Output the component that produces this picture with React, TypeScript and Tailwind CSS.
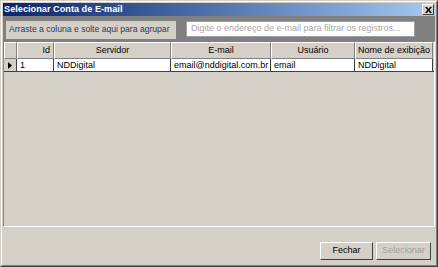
import React from "react";

const cols = [
  { name: "Id", w: 37 },
  { name: "Servidor", w: 117 },
  { name: "E-mail", w: 100 },
  { name: "Usuário", w: 84 },
  { name: "Nome de exibição", w: 78 },
];
const row = ["1", "NDDigital", "email@nddigital.com.br", "email", "NDDigital"];

export default function App() {
  return (
    <div
      className="w-[438px] h-[267px] bg-[#d4d0c8] border border-t-[#d4d0c8] border-l-[#d4d0c8] border-r-[#404040] border-b-[#404040] flex flex-col text-[9px] text-black"
      style={{ fontFamily: '"Liberation Sans", Arial, sans-serif' }}
    >
      <div className="border border-t-white border-l-white border-r-[#808080] border-b-[#808080] flex flex-col flex-1 p-px">
        {/* Title bar */}
        <div className="h-[13px] flex items-center justify-between bg-gradient-to-r from-[#0a246a] to-[#a6caf0] pl-[1px] pr-[1px]">
          <span className="text-white font-bold text-[9.2px] leading-none">Selecionar Conta de E-mail</span>
          <div className="w-[12px] h-[11px] bg-[#d4d0c8] border border-t-white border-l-white border-r-[#404040] border-b-[#404040] flex items-center justify-center">
            <svg width="7" height="6" viewBox="0 0 7 6">
              <path d="M0 0 L2 0 L3.5 2 L5 0 L7 0 L4.5 3 L7 6 L5 6 L3.5 4 L2 6 L0 6 L2.5 3 Z" fill="#000" />
            </svg>
          </div>
        </div>
        {/* Group panel */}
        <div className="h-[25px] bg-[#808080] flex items-center pl-[3px] pr-[20px]">
          <div className="h-[18px] w-[170px] bg-[#d4d0c8] flex items-center pl-[3px] text-[#2a3a5a] text-[8.6px] whitespace-nowrap mt-[2px]">
            Arraste a coluna e solte aqui para agrupar
          </div>
          <div className="ml-[10px] h-[16px] flex-1 bg-white border border-[#a0a0a0] flex items-center pl-[4px] text-[#a8a8a8] text-[9px] whitespace-nowrap overflow-hidden">
            Digite o endereço de e-mail para filtrar os registros...
          </div>
        </div>
        {/* Grid */}
        <div className="h-[186px] bg-[#d4d0c8] border border-t-[#808080] border-l-[#808080] border-r-white border-b-white flex flex-col">
          <div className="flex h-[17px]">
            <div className="w-[13px] bg-[#d4d0c8] border border-t-white border-l-white border-r-[#808080] border-b-[#808080]" />
            {cols.map((c, i) => (
              <div
                key={c.name}
                style={{ width: c.w }}
                className={`bg-[#d4d0c8] border border-t-white border-l-white border-r-[#808080] border-b-[#808080] flex items-center ${
                  i === 0 ? "justify-end pr-[3px]" : "justify-center"
                } whitespace-nowrap overflow-hidden text-[9px]`}
              >
                {c.name}
              </div>
            ))}
          </div>
          <div className="flex h-[13px] border-b border-[#404040]">
            <div className="w-[13px] bg-[#d4d0c8] border-r border-[#404040] flex items-center justify-center">
              <svg width="4" height="7" viewBox="0 0 4 7">
                <path d="M0 0 L4 3.5 L0 7 Z" fill="#000" />
              </svg>
            </div>
            {cols.map((c, i) => (
              <div
                key={c.name}
                style={{ width: c.w }}
                className="bg-white border-r border-[#404040] flex items-center pl-[3px] whitespace-nowrap overflow-hidden text-[9px] leading-none"
              >
                {row[i]}
              </div>
            ))}
          </div>
        </div>
        {/* Footer */}
        <div className="flex-1 flex items-end justify-end gap-[3px] pr-[4px] pb-[4px]">
          <button className="w-[53px] h-[18px] bg-[#d4d0c8] border border-t-white border-l-white border-r-[#404040] border-b-[#404040] text-[9px] flex items-center justify-center">
            Fechar
          </button>
          <button className="w-[55px] h-[18px] bg-[#d4d0c8] border border-t-white border-l-white border-r-[#404040] border-b-[#404040] text-[9px] text-[#a0a0a0] flex items-center justify-center">
            Selecionar
          </button>
        </div>
      </div>
    </div>
  );
}
